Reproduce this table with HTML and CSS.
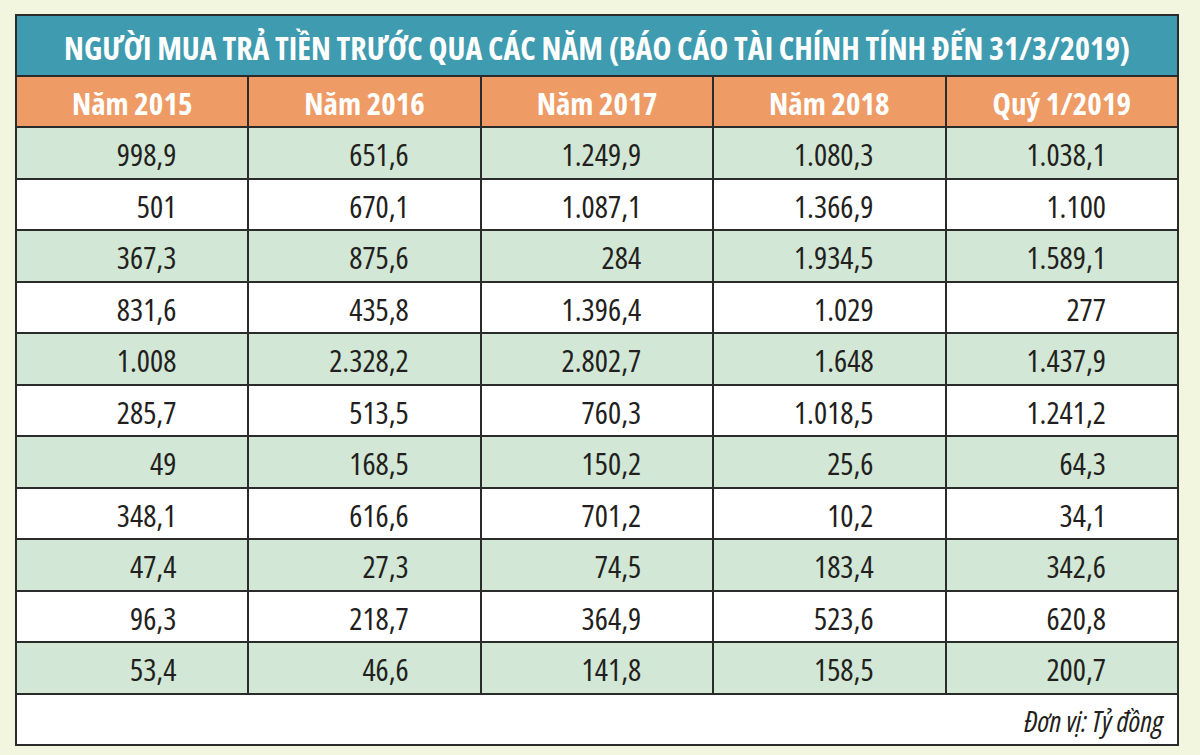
FILE: index.html
```html
<!DOCTYPE html>
<html lang="vi">
<head>
<meta charset="utf-8">
<link rel="stylesheet" href="styles.css">
</head>
<body>
<div class="frame">
<table class="data">
<thead>
<tr class="title-row"><th colspan="5">NGƯỜI MUA TRẢ TIỀN TRƯỚC QUA CÁC NĂM (BÁO CÁO TÀI CHÍNH TÍNH ĐẾN 31/3/2019)</th></tr>
<tr class="head-row"><th>Năm 2015</th><th>Năm 2016</th><th>Năm 2017</th><th>Năm 2018</th><th>Quý 1/2019</th></tr>
</thead>
<tbody>
<tr class="g"><td>998,9</td><td>651,6</td><td>1.249,9</td><td>1.080,3</td><td>1.038,1</td></tr>
<tr class="w"><td>501</td><td>670,1</td><td>1.087,1</td><td>1.366,9</td><td>1.100</td></tr>
<tr class="g"><td>367,3</td><td>875,6</td><td>284</td><td>1.934,5</td><td>1.589,1</td></tr>
<tr class="w"><td>831,6</td><td>435,8</td><td>1.396,4</td><td>1.029</td><td>277</td></tr>
<tr class="g"><td>1.008</td><td>2.328,2</td><td>2.802,7</td><td>1.648</td><td>1.437,9</td></tr>
<tr class="w"><td>285,7</td><td>513,5</td><td>760,3</td><td>1.018,5</td><td>1.241,2</td></tr>
<tr class="g"><td>49</td><td>168,5</td><td>150,2</td><td>25,6</td><td>64,3</td></tr>
<tr class="w"><td>348,1</td><td>616,6</td><td>701,2</td><td>10,2</td><td>34,1</td></tr>
<tr class="g"><td>47,4</td><td>27,3</td><td>74,5</td><td>183,4</td><td>342,6</td></tr>
<tr class="w"><td>96,3</td><td>218,7</td><td>364,9</td><td>523,6</td><td>620,8</td></tr>
<tr class="g"><td>53,4</td><td>46,6</td><td>141,8</td><td>158,5</td><td>200,7</td></tr>
<tr class="foot-row"><td colspan="5">Đơn vị: Tỷ đồng</td></tr>
</tbody>
</table>
</div>
</body>
</html>
```
FILE: styles.css
```css
html, body {
  margin: 0;
  padding: 0;
  background: #f2f6df;
}
body {
  font-family: "Open Sans", "Roboto", "DejaVu Sans Condensed", sans-serif;
  font-stretch: 75%;
  color: #231f20;
}
.frame {
  padding: 14px 0 0 15px;
}
.data {
  width: 1164px;
  border-collapse: collapse;
  table-layout: fixed;
  border: 2px solid #2b2b2b;
}
.data th, .data td {
  border: 2px solid #2b2b2b;
  padding: 0;
  line-height: 1;
}
.title-row th {
  height: 55px;
  padding-top: 4px;
  background: #3f9bb0;
  color: #fff;
  font-size: 32px;
  font-weight: 700;
  text-align: center;
}
.head-row th {
  height: 45px;
  padding-top: 4px;
  background: #ee9b65;
  color: #fff;
  font-size: 31px;
  font-weight: 700;
  text-align: center;
}
.g td, .w td {
  height: 45.5px;
  padding-top: 4px;
  font-size: 31px;
  font-stretch: 82%;
  text-align: right;
  padding-right: 71px;
}
.g td { background: #d2e7d5; }
.w td { background: #ffffff; }
.foot-row td {
  height: 47px;
  padding-top: 2px;
  background: #fff;
  font-size: 29px;
  font-style: italic;
  text-align: right;
  padding-right: 14px;
}
```
